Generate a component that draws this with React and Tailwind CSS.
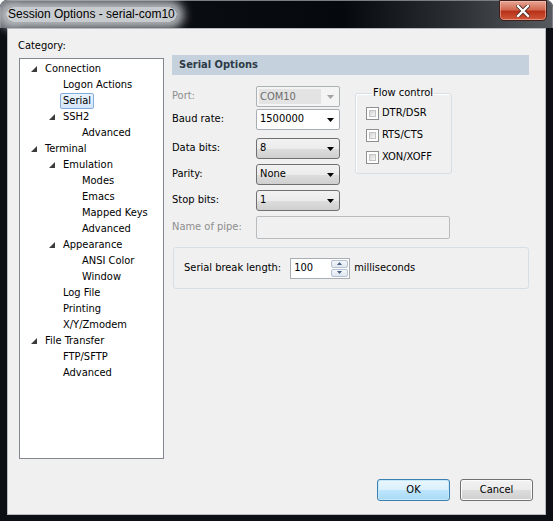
import React from 'react'

const tree = [
  [0, 'Connection', true],
  [1, 'Logon Actions'],
  [1, 'Serial', false, true],
  [1, 'SSH2', true],
  [2, 'Advanced'],
  [0, 'Terminal', true],
  [1, 'Emulation', true],
  [2, 'Modes'],
  [2, 'Emacs'],
  [2, 'Mapped Keys'],
  [2, 'Advanced'],
  [1, 'Appearance', true],
  [2, 'ANSI Color'],
  [2, 'Window'],
  [1, 'Log File'],
  [1, 'Printing'],
  [1, 'X/Y/Zmodem'],
  [0, 'File Transfer', true],
  [1, 'FTP/SFTP'],
  [1, 'Advanced'],
]

const indent = ['pl-[11px]', 'pl-[29px]', 'pl-[48px]']

function Expander() {
  return (
    <svg width="6" height="6" viewBox="0 0 6 6">
      <polygon points="6,0 6,6 0,6" fill="#3b3b3b" />
    </svg>
  )
}

function Arrow({ color = '#000' }) {
  return (
    <svg width="7" height="4" viewBox="0 0 7 4">
      <polygon points="0,0 7,0 3.5,4" fill={color} />
    </svg>
  )
}

function TreeRow({ level, label, expandable, selected }) {
  return (
    <div className={`h-[16px] flex items-center ${indent[level]}`}>
      <span className="w-[14px] flex items-center">{expandable && <Expander />}</span>
      {selected ? (
        <span className="-ml-[3px] h-[16px] px-[2px] flex items-center rounded-[2px] border border-[#84acdd] bg-[linear-gradient(#eaf3fd,#d3e6fb)]">
          {label}
        </span>
      ) : (
        <span>{label}</span>
      )}
    </div>
  )
}

function ButtonCombo({ value }) {
  return (
    <div className="w-[84px] h-[21px] rounded-[3px] border border-[#707070] bg-[linear-gradient(#f2f2f2_0%,#ebebeb_50%,#dddddd_51%,#cfcfcf_100%)] flex items-center justify-between pl-[3px] pr-[5px]">
      <span>{value}</span>
      <Arrow />
    </div>
  )
}

function Checkbox({ label }) {
  return (
    <div className="flex items-center h-[13px]">
      <span className="w-[13px] h-[13px] border border-[#8e8f8f] bg-white p-[2px] flex">
        <span className="flex-1 bg-[linear-gradient(135deg,#d4d4d4,#f7f7f7)] border border-[#c3c3c3]" />
      </span>
      <span className="ml-[3px]">{label}</span>
    </div>
  )
}

function Label({ children, disabled }) {
  return (
    <span className={`w-[84px] ${disabled ? 'text-[#8d8d8d]' : 'text-black'}`}>{children}</span>
  )
}

export default function App() {
  return (
    <div className="w-[553px] h-[521px] bg-[#0c1015] rounded-t-[7px] flex flex-col overflow-hidden font-['DejaVu_Sans_Condensed',Tahoma,sans-serif] text-[11px] text-black">
      {/* Title bar */}
      <div className="h-[28px] flex items-start justify-between bg-[linear-gradient(90deg,#5d6269_0%,#23272d_4%,#0a0d12_30%,#05080c_62%,#2b2e33_82%,#56595d_100%)] rounded-t-[7px] border-t border-l border-r border-[#7a7e84]">
        <div className="ml-[5px] mt-[6px] px-[2px] h-[15px] flex items-center rounded-[8px] bg-[rgba(210,213,216,0.95)] shadow-[0_0_10px_7px_rgba(205,208,212,0.85)]">
          <span className="font-['Liberation_Sans',Arial,sans-serif] text-[12px] leading-[15px] text-black">
            Session Options - serial-com10
          </span>
        </div>
        <div className="mr-[5px] -mt-px w-[48px] h-[21px] rounded-b-[5px] border border-[#3b1f1a] bg-[linear-gradient(#e6a696_0%,#d36a52_45%,#b8321a_55%,#d0573a_100%)] shadow-[inset_0_0_0_1px_rgba(255,200,190,0.5)] flex items-center justify-center">
          <svg width="14" height="12" viewBox="0 0 14 12">
            <path d="M2 1 L12 11 M12 1 L2 11" stroke="#4a2620" strokeWidth="4" strokeLinecap="square" />
            <path d="M2 1 L12 11 M12 1 L2 11" stroke="#ffffff" strokeWidth="2.4" strokeLinecap="square" />
          </svg>
        </div>
      </div>

      {/* Client area */}
      <div className="mx-[7px] mb-[6px] flex-1 border border-[#b7bbc0] bg-[#f0f0f0] flex flex-col">
        <div className="flex">
          {/* Left: category tree */}
          <div className="pl-[10px] flex flex-col">
            <div className="mt-[10px] h-[14px] leading-[14px]">Category:</div>
            <div className="mt-[5px] ml-px w-[145px] h-[401px] border border-[#828790] bg-white pt-[2px]">
              {tree.map(([level, label, expandable, selected], i) => (
                <TreeRow key={i} level={level} label={label} expandable={expandable} selected={selected} />
              ))}
            </div>
          </div>

          {/* Right: serial options */}
          <div className="ml-[8px] mt-[26px] w-[357px] flex flex-col">
            <div className="h-[20px] bg-[#c5d2de] flex items-center pl-[7px] pt-px font-bold text-[#2d3a47]">
              Serial Options
            </div>

            <div className="mt-[11px] flex items-start">
              <div className="flex flex-col">
                <div className="h-[21px] flex items-center">
                  <Label disabled>Port:</Label>
                  <div className="w-[84px] h-[21px] rounded-[2px] border border-[#adb2b5] bg-[#f4f4f4] flex items-center justify-between pl-[2px] pr-[5px]">
                    <span className="w-[62px] h-[15px] bg-[#e3e3e3] pl-px leading-[15px] text-[#6d6d6d]">COM10</span>
                    <Arrow color="#a3a3a3" />
                  </div>
                </div>
                <div className="mt-[2px] h-[21px] flex items-center">
                  <Label>Baud rate:</Label>
                  <div className="w-[84px] h-[21px] rounded-[2px] border border-[#a9aeb4] bg-white flex items-center justify-between pl-[3px] pr-[5px]">
                    <span>1500000</span>
                    <Arrow />
                  </div>
                </div>
                <div className="mt-[8px] h-[21px] flex items-center">
                  <Label>Data bits:</Label>
                  <ButtonCombo value="8" />
                </div>
                <div className="mt-[5px] h-[21px] flex items-center">
                  <Label>Parity:</Label>
                  <ButtonCombo value="None" />
                </div>
                <div className="mt-[5px] h-[21px] flex items-center">
                  <Label>Stop bits:</Label>
                  <ButtonCombo value="1" />
                </div>
              </div>

              <fieldset className="ml-[15px] w-[97px] h-[88px] border border-[#d5dfe5] rounded-[3px] pl-[10px] shadow-[inset_1px_1px_0_#fff]">
                <legend className="ml-[6px] px-px leading-[14px]">Flow control</legend>
                <div className="mt-[7px] flex flex-col gap-[9px]">
                  <Checkbox label="DTR/DSR" />
                  <Checkbox label="RTS/CTS" />
                  <Checkbox label="XON/XOFF" />
                </div>
              </fieldset>
            </div>

            <div className="mt-[5px] h-[23px] flex items-center">
              <Label disabled>Name of pipe:</Label>
              <div className="w-[194px] h-[23px] rounded-[2px] border border-[#b9bcbf] bg-[#f0f0f0]" />
            </div>

            <div className="mt-[8px] ml-px w-[356px] h-[42px] border border-[#d5dfe5] rounded-[3px] flex items-center pl-[10px]">
              <span>Serial break length:</span>
              <div className="ml-[9px] w-[60px] h-[21px] border border-[#a9aeb4] bg-white flex items-center justify-between pl-[3px] pr-px">
                <span>100</span>
                <div className="flex flex-col gap-px">
                  <div className="w-[17px] h-[8px] border border-[#b5c2d1] rounded-[2px] bg-[linear-gradient(#f5f8fb,#dfe6ee)] flex items-center justify-center">
                    <svg width="5" height="3" viewBox="0 0 5 3"><polygon points="0,3 5,3 2.5,0" fill="#4b5f85" /></svg>
                  </div>
                  <div className="w-[17px] h-[8px] border border-[#b5c2d1] rounded-[2px] bg-[linear-gradient(#f5f8fb,#dfe6ee)] flex items-center justify-center">
                    <svg width="5" height="3" viewBox="0 0 5 3"><polygon points="0,0 5,0 2.5,3" fill="#4b5f85" /></svg>
                  </div>
                </div>
              </div>
              <span className="ml-[4px]">milliseconds</span>
            </div>
          </div>
        </div>

        {/* Buttons */}
        <div className="mt-[20px] flex justify-end gap-[10px] pr-[12px]">
          <button className="w-[73px] h-[22px] rounded-[3px] border border-[#3c7fb1] bg-[linear-gradient(#eaf6fd_0%,#d9f0fc_50%,#bee6fd_51%,#a7d9f5_100%)] shadow-[inset_0_0_0_1px_#c5e9fb]">
            OK
          </button>
          <button className="w-[73px] h-[22px] rounded-[3px] border border-[#707070] bg-[linear-gradient(#f2f2f2_0%,#ebebeb_50%,#dddddd_51%,#cfcfcf_100%)] shadow-[inset_0_0_0_1px_#fcfcfc]">
            Cancel
          </button>
        </div>
      </div>
    </div>
  )
}
